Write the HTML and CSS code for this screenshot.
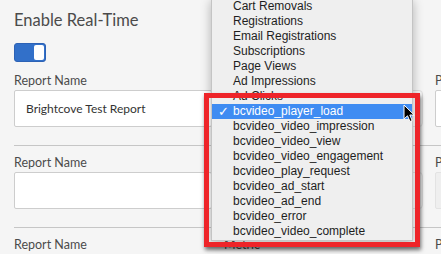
FILE: index.html
```html
<!DOCTYPE html>
<html>
<head>
<meta charset="utf-8">
<link rel="stylesheet" href="styles.css">
</head>
<body>
<div class="page">
  <h1 class="title">Enable Real-Time</h1>
  <div class="toggle"><span class="knob"></span></div>
  <div class="rows">
    <div class="row">
      <div class="field"><div class="label">Report Name</div><div class="input">Brightcove Test Report</div></div>
      <div class="field"><div class="label">Metric</div><div class="select"></div></div>
      <div class="field"><div class="label">Property</div><div class="input"></div></div>
    </div>
    <div class="row">
      <div class="field"><div class="label">Report Name</div><div class="input"></div></div>
      <div class="field"><div class="label">Metric</div><div class="select"></div></div>
      <div class="field"><div class="label">Property</div><div class="input disabled"></div></div>
    </div>
    <div class="row">
      <div class="field"><div class="label">Report Name</div><div class="input"></div></div>
      <div class="field"><div class="label">Metric</div><div class="select"></div></div>
      <div class="field"><div class="label">Property</div><div class="input"></div></div>
    </div>
  </div>
</div>

<div class="menu">
  <div class="item">Cart Removals</div>
  <div class="item">Registrations</div>
  <div class="item">Email Registrations</div>
  <div class="item">Subscriptions</div>
  <div class="item">Page Views</div>
  <div class="item">Ad Impressions</div>
  <div class="item">Ad Clicks</div>
  <div class="item selected"><span class="check">✓</span>bcvideo_player_load</div>
  <div class="item">bcvideo_video_impression</div>
  <div class="item">bcvideo_video_view</div>
  <div class="item">bcvideo_video_engagement</div>
  <div class="item">bcvideo_play_request</div>
  <div class="item">bcvideo_ad_start</div>
  <div class="item">bcvideo_ad_end</div>
  <div class="item">bcvideo_error</div>
  <div class="item">bcvideo_video_complete</div>
</div>

<div class="callout"></div>

<svg class="cursor" width="13" height="19" viewBox="0 0 13 19">
  <path d="M1 1 L1 15 L4.5 11.8 L7 17.5 L9.2 16.5 L6.8 11 L11.2 11 Z" fill="#000" stroke="#fff" stroke-width="1" stroke-linejoin="round"/>
</svg>
</body>
</html>
```

FILE: styles.css
```css
html, body {
  margin: 0;
  padding: 0;
}
body {
  width: 441px;
  height: 254px;
  overflow: hidden;
  background: #f5f5f5;
  position: relative;
  font-family: Lato, "Open Sans", sans-serif;
  color: #4b4b4b;
}
.page {
  padding: 9px 0 0 14px;
}
.title {
  margin: 0;
  font-size: 16.5px;
  line-height: 22px;
  font-weight: 400;
  color: #4b4b4b;
}
.toggle {
  margin-top: 12px;
  width: 32px;
  height: 19px;
  box-sizing: border-box;
  background: #3270c9;
  border: 1px solid #2d62b5;
  border-radius: 3px;
  display: flex;
  justify-content: flex-end;
  padding: 1px;
}
.knob {
  width: 10px;
  background: #fff;
  border-radius: 2px;
}
.rows {
  margin-top: 11px;
}
.row {
  display: grid;
  grid-template-columns: 198px 199px 199px;
  column-gap: 12px;
  padding-bottom: 18px;
}
.row + .row {
  border-top: 1px solid #c6c6c6;
  padding-top: 9px;
}
.label {
  font-size: 12.5px;
  line-height: 16px;
  margin-bottom: 1px;
  white-space: nowrap;
}
.input {
  height: 37px;
  box-sizing: border-box;
  background: #fff;
  border: 1px solid #cdcdcd;
  padding-left: 11px;
  font-size: 12px;
  line-height: 35px;
  color: #333;
  border-radius: 2px;
}
.input.disabled {
  background: #efefef;
  border-color: #e3e3e3;
}
.select {
  height: 37px;
  box-sizing: border-box;
  background: #f7f7f7;
  border: 1px solid #dedede;
  border-radius: 4px;
}
.menu {
  position: absolute;
  left: 211px;
  top: -2px;
  width: 202px;
  box-sizing: border-box;
  background: #efefef;
  border: 1px solid #c4c4c4;
  padding-bottom: 1px;
  box-shadow: 0 3px 10px rgba(0, 0, 0, 0.28);
  font-family: "Liberation Sans", Arial, sans-serif;
  font-size: 12px;
  color: #1e1e1e;
}
.item {
  height: 15px;
  line-height: 15px;
  padding-left: 21px;
  position: relative;
  white-space: nowrap;
}
.item.selected {
  background: #3f8cf2;
  color: #fff;
}
.check {
  position: absolute;
  left: 6px;
  top: 0;
  font-size: 13px;
  font-family: "DejaVu Sans", sans-serif;
}
.callout {
  position: absolute;
  left: 204px;
  top: 93px;
  width: 216px;
  height: 154px;
  box-sizing: border-box;
  border: 5px solid #ee2429;
  box-shadow: 1px 3px 4px rgba(0, 0, 0, 0.55);
}
.cursor {
  position: absolute;
  left: 403px;
  top: 104px;
}
```
